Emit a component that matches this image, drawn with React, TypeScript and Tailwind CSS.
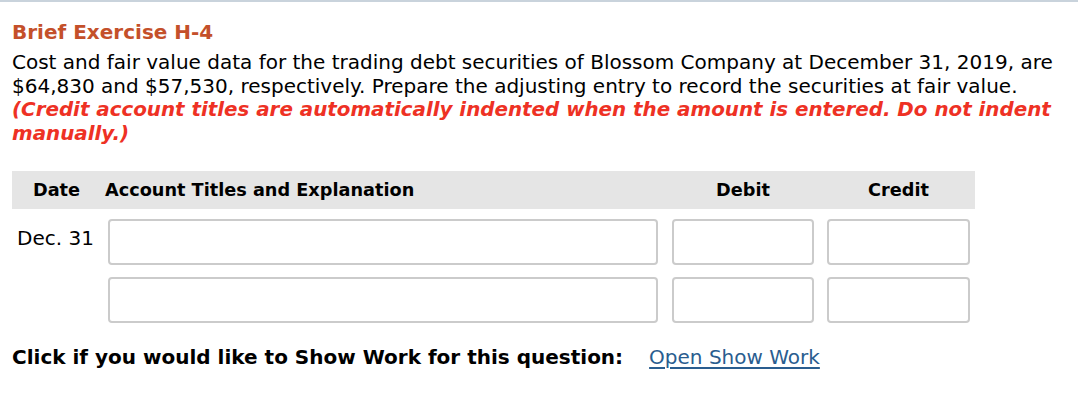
import React from "react";

const font = { fontFamily: '"DejaVu Sans", Verdana, sans-serif' };

function Box({ w }: { w: string }) {
  return <div className={`${w} h-[46px] border-2 border-[#cbcbcb] rounded-[4px] bg-white`} />;
}

function Row({ date }: { date?: string }) {
  return (
    <div className="flex items-start">
      <div className="w-[96px] pl-[5px] pt-[7px] text-[20px] leading-[24px]">{date}</div>
      <Box w="w-[550px]" />
      <div className="w-[14px]" />
      <Box w="w-[142px]" />
      <div className="w-[13px]" />
      <Box w="w-[143px]" />
    </div>
  );
}

export default function App() {
  return (
    <div className="w-[1078px] h-[408px] bg-white border-t-2 border-[#c9d3dc] text-black" style={font}>
      <div className="pl-[12px] pr-[8px]">
        <div className="pt-[18px] text-[20px] leading-[24px] font-bold text-[#c4502a]">Brief Exercise H-4</div>
        <div className="mt-[7px] text-[20px] leading-[23.5px]">
          Cost and fair value data for the trading debt securities of Blossom Company at December 31, 2019, are $64,830 and $57,530, respectively. Prepare the adjusting entry to record the securities at fair value.{" "}
          <span className="text-[#ee3124] font-bold italic text-[19.85px]">
            (Credit account titles are automatically indented when the amount is entered. Do not indent manually.)
          </span>
        </div>
        <div className="mt-[26px] w-[963px]">
          <div className="flex items-center h-[38px] bg-[#e5e5e5] text-[17.7px] leading-[24px] font-bold">
            <div className="w-[93px] pl-[21px]">Date</div>
            <div className="w-[567px]">Account Titles and Explanation</div>
            <div className="w-[142px] text-center">Debit</div>
            <div className="w-[13px]" />
            <div className="w-[143px] text-center">Credit</div>
          </div>
          <div className="flex flex-col gap-[12px] mt-[10px]">
            <Row date="Dec. 31" />
            <Row />
          </div>
        </div>
        <div className="mt-[22px] flex items-center text-[20px] leading-[24px]">
          <span className="font-bold">Click if you would like to Show Work for this question:</span>
          <a className="ml-[26px] text-[#2a5d8f] underline underline-offset-[3px]" href="#">Open Show Work</a>
        </div>
      </div>
    </div>
  );
}
